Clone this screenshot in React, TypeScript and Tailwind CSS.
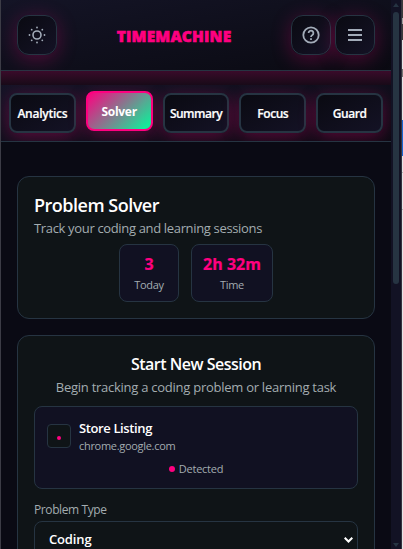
import type { ReactNode } from "react";

const tabs = [
  { label: "Analytics", active: false, tracking: "tracking-[-0.25px]" },
  { label: "Solver", active: true, tracking: "tracking-[-0.3px]" },
  { label: "Summary", active: false, tracking: "tracking-[-0.5px]" },
  { label: "Focus", active: false, tracking: "tracking-[-0.45px]" },
  { label: "Guard", active: false, tracking: "tracking-[-0.45px]" },
];

function IconButton({ label, children }: { label: string; children: ReactNode }) {
  return (
    <button
      aria-label={label}
      className="flex size-10 items-center justify-center rounded-xl border border-[#263442] bg-linear-to-br from-[#0a0a12] to-[#141225] text-[#a3acb9] shadow-[0_4px_20px_rgba(255,0,128,0.28)]"
    >
      {children}
    </button>
  );
}

function SunIcon() {
  return (
    <svg width="18" height="18" viewBox="0 0 18 18" fill="currentColor">
      <circle cx="9" cy="9" r="4" fill="none" stroke="currentColor" strokeWidth="1.6" />
      <circle cx="9" cy="1.5" r="0.9" />
      <circle cx="9" cy="16.5" r="0.9" />
      <circle cx="1.5" cy="9" r="0.9" />
      <circle cx="16.5" cy="9" r="0.9" />
      <circle cx="3.7" cy="3.7" r="0.9" />
      <circle cx="14.3" cy="3.7" r="0.9" />
      <circle cx="3.7" cy="14.3" r="0.9" />
      <circle cx="14.3" cy="14.3" r="0.9" />
    </svg>
  );
}

function HelpIcon() {
  return (
    <svg width="18" height="18" viewBox="0 0 18 18" fill="none" stroke="currentColor" strokeWidth="1.8">
      <circle cx="9" cy="9" r="7.7" />
      <path d="M6.6 7.1a2.4 2.4 0 1 1 3.8 1.9c-.9.7-1.4 1-1.4 2" />
      <path d="M9 12.2v1.7" />
    </svg>
  );
}

function MenuIcon() {
  return (
    <svg width="14" height="12" viewBox="0 0 14 12" fill="currentColor">
      <path d="M0 0h14v2H0zM0 5h14v2H0zM0 10h14v2H0z" />
    </svg>
  );
}

function Stat({ value, label, className }: { value: string; label: string; className: string }) {
  return (
    <div className={`flex h-[58px] flex-col items-center rounded-lg border border-[#263442] bg-[#111122] pt-[7px] whitespace-nowrap ${className}`}>
      <div className="text-[16px] leading-[24px] font-bold text-[#ff0080] [-webkit-text-stroke:0.2px_#ff0080]">{value}</div>
      <div className="text-[11px] leading-[17px] tracking-[-0.3px] text-[#a3acb0]">{label}</div>
    </div>
  );
}

export default function App() {
  return (
    <div className="flex h-[549px] w-[403px] overflow-hidden bg-[#0a0a14] font-['Open_Sans','Noto_Sans',sans-serif] text-white">
      <div className="w-px shrink-0 bg-[#3c3c46]" />
      <main className="flex w-[390px] shrink-0 flex-col overflow-hidden">
        <header className="flex h-[71px] shrink-0 items-center justify-between border-b border-[#263442] bg-linear-to-br from-[#141426] to-[#0a0a12] px-4">
          <IconButton label="Toggle theme">
            <SunIcon />
          </IconButton>
          <h1 className="pt-0.5 text-[15.5px] leading-6 font-black tracking-[0.15px] whitespace-nowrap text-[#ff0080] [-webkit-text-stroke:0.6px_#ff0080]">
            TIMEMACHINE
          </h1>
          <div className="flex gap-1">
            <IconButton label="Help">
              <HelpIcon />
            </IconButton>
            <IconButton label="Menu">
              <MenuIcon />
            </IconButton>
          </div>
        </header>
        <div className="h-[14px] shrink-0 bg-linear-to-b from-[#3a0a2a] to-[#180a18]" />
        <nav className="flex h-[57px] shrink-0 gap-[10px] overflow-hidden border-b border-[#263442] bg-linear-to-br from-[#141426] to-[#0a0a12] px-2 pt-2">
          {tabs.map((tab) => (
            <button
              key={tab.label}
              className={`flex h-10 min-w-0 flex-1 items-center justify-center rounded-lg border-2 pt-0.5 text-[12px] whitespace-nowrap shadow-[0_4px_18px_rgba(255,0,128,0.32)] ${tab.tracking} ${
                tab.active
                  ? "-mt-0.5 border-[#ff0080] bg-[linear-gradient(135deg,#ff0080,#00ff9d)] font-bold"
                  : "border-[#263442] bg-linear-to-br from-[#0a0a12] to-[#141225] font-semibold [-webkit-text-stroke:0.2px_#ffffff]"
              }`}
            >
              {tab.label}
            </button>
          ))}
        </nav>

        <div className="flex flex-col gap-4 px-4 pt-[34px]">
          <section className="h-[143px] shrink-0 rounded-xl border border-[#263442] bg-[#0f1417] px-4 pt-4">
            <h2 className="text-[18px] leading-[24px] font-semibold tracking-[-0.5px]">Problem Solver</h2>
            <p className="text-[13px] leading-[22px] tracking-[-0.34px] text-[#a3acb0]">Track your coding and learning sessions</p>
            <div className="mt-[5px] flex justify-center gap-3">
              <Stat value="3" label="Today" className="w-[60px]" />
              <Stat value="2h 32m" label="Time" className="w-[82px]" />
            </div>
          </section>

          <section className="h-[300px] shrink-0 rounded-xl border border-[#263442] bg-[#0f1417] px-4 pt-4">
            <h2 className="text-center text-[16px] leading-[24px] font-semibold tracking-[-0.5px]">Start New Session</h2>
            <p className="text-center text-[13px] leading-[22px] tracking-[-0.26px] whitespace-nowrap text-[#a3acb0]">
              Begin tracking a coding problem or learning task
            </p>
            <div className="mt-2 h-[83px] rounded-lg border border-[#263442] bg-[#111122] px-3 pt-3">
              <div className="flex items-start gap-2">
                <div className="mt-[5px] flex size-6 items-center justify-center rounded border border-[#263442] bg-[#0f1417]">
                  <div className="mt-[3px] size-1 rounded-full bg-[#ff0080]" />
                </div>
                <div>
                  <div className="text-[13px] leading-[19px] font-semibold tracking-[-0.38px]">Store Listing</div>
                  <div className="text-[11px] leading-[16px] tracking-[-0.3px] text-[#a3acb0]">chrome.google.com</div>
                </div>
              </div>
              <div className="mt-[6px] flex items-center justify-center gap-1 text-[11px] leading-[17px] tracking-[-0.25px] text-[#a3acb0]">
                <span className="size-1.5 rounded-full bg-[#ff0080]" />
                Detected
              </div>
            </div>
            <div className="mt-3 text-[12px] leading-[18px] tracking-[-0.4px] text-[#a3acb0]">Problem Type</div>
            <div className="mt-[2px] flex h-[38px] items-center justify-between rounded-lg border border-[#263442] bg-[#0f1417] pr-1 pl-[14px] text-[13px] font-semibold tracking-[-0.15px]">
              Coding
              <svg width="9" height="6" viewBox="0 0 9 6" fill="none" stroke="currentColor" strokeWidth="2">
                <path d="M.7.7 4.5 4.5 8.3.7" />
              </svg>
            </div>
          </section>
        </div>
      </main>

      <aside className="flex w-[10px] shrink-0 flex-col items-center bg-[#121224] pt-[3px] pb-[2px]">
        <svg width="6" height="4" viewBox="0 0 6 4" fill="#263442">
          <path d="M0 4 3 0l3 4z" />
        </svg>
        <div className="mt-[5px] h-[272px] w-1.5 rounded-full bg-[#263442]" />
        <svg className="mt-auto" width="6" height="4" viewBox="0 0 6 4" fill="#263442">
          <path d="M0 0h6L3 4z" />
        </svg>
      </aside>
      <div className="w-px shrink-0 bg-[#37333f]" />
      <div className="flex w-px shrink-0 flex-col bg-[#e4e4e6]">
        <div className="h-[18px] bg-[#3c3c3c]" />
        <div className="h-[6px] bg-[#a0a0a0]" />
        <div className="h-4 bg-[#3c3c3c]" />
        <div className="h-[29px]" />
        <div className="h-2 bg-[#777777]" />
        <div className="h-[43px]" />
        <div className="h-9 bg-[#1967d2]" />
        <div className="h-4" />
        <div className="h-px bg-[#b5b5b8]" />
        <div className="h-9" />
        <div className="h-px bg-[#b5b5b8]" />
      </div>
    </div>
  );
}
